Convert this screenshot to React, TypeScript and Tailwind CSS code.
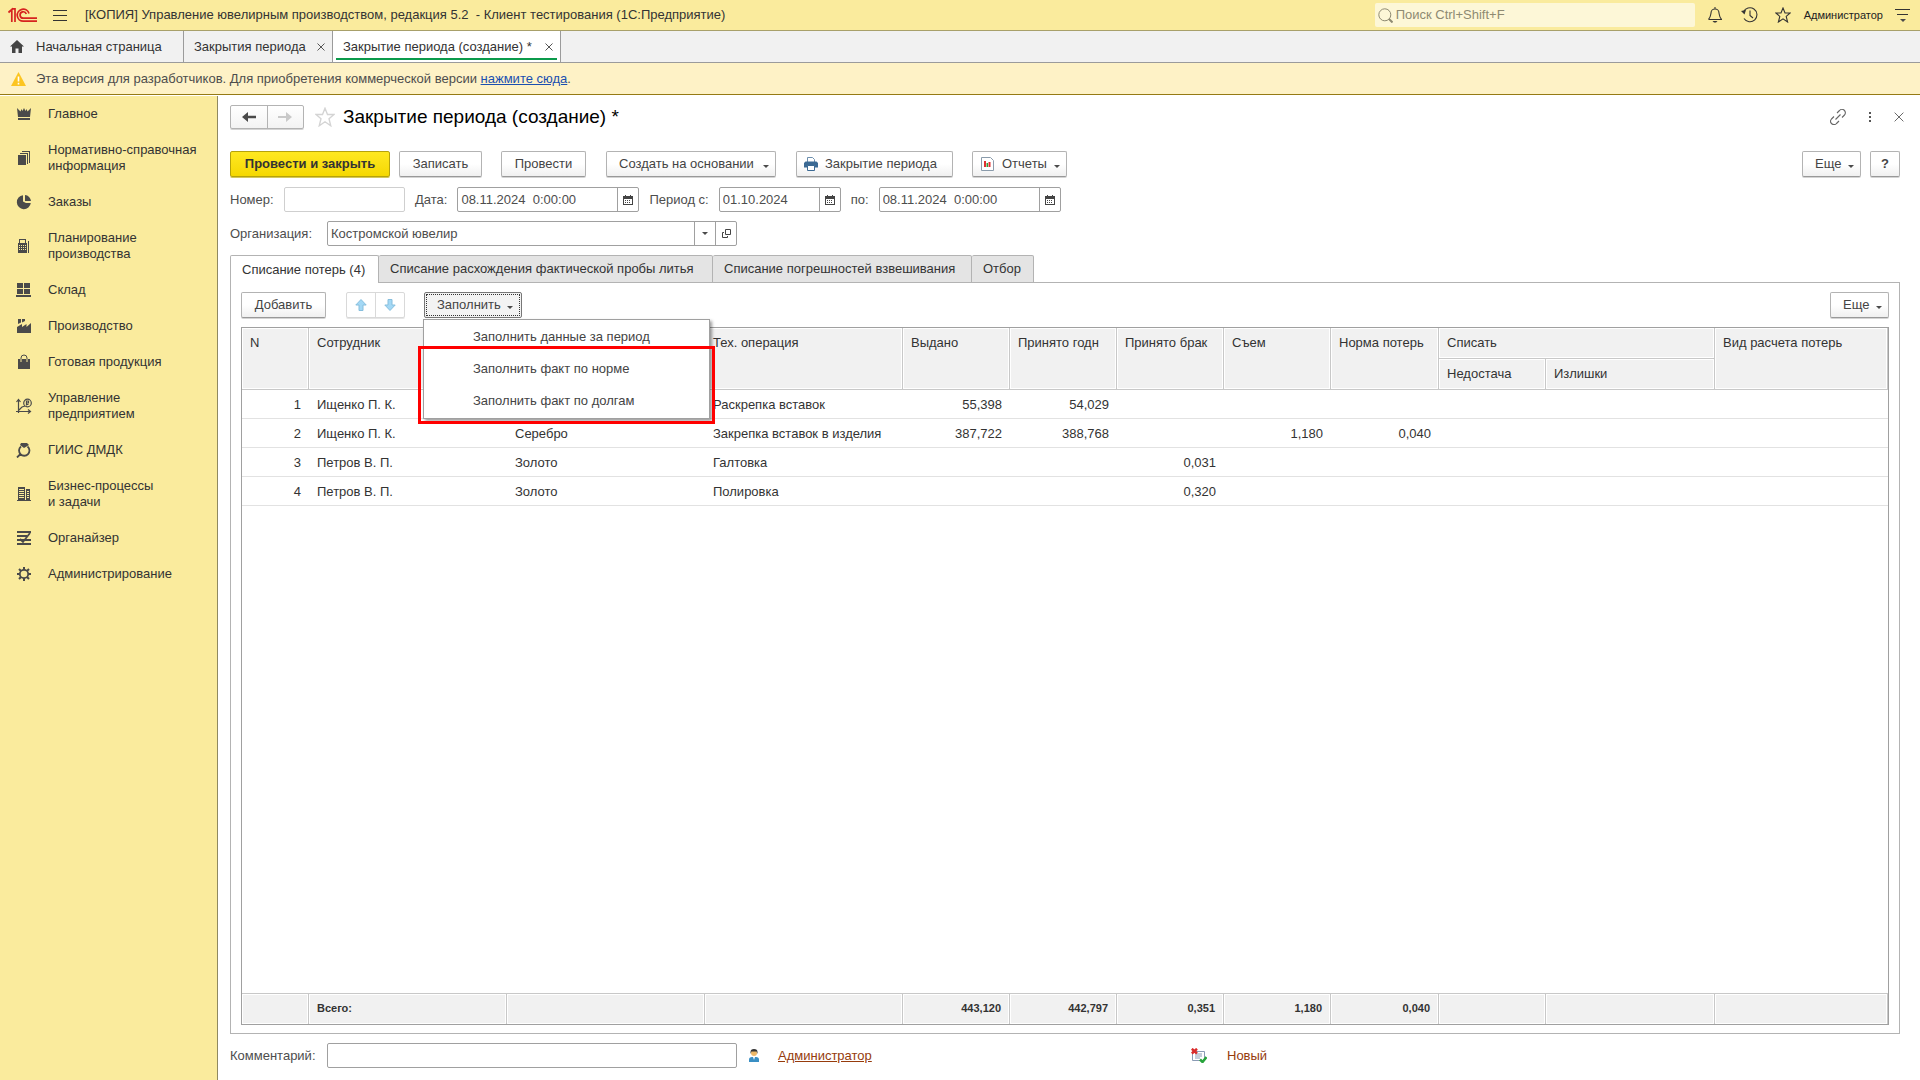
import type { ReactNode } from "react";

type IconProps = { className?: string };

function Logo() {
  return (
    <svg width="29" height="16" viewBox="0 0 29 16" fill="none" stroke="#d6231f" strokeWidth="1.7">
      <path d="M0.500 5.500L3.800 2.500V15M7 15V1.800H4.800L0.800 5" />
      <path d="M21 6.500A6 6 0 1 0 15.500 14.200H29" />
      <path d="M18.300 7A3.200 3.200 0 1 0 15.500 11.200H29" />
    </svg>
  );
}

function Glyph({ children }: { children: ReactNode }) {
  return (
    <svg width="16" height="16" viewBox="0 0 16 16" fill="#4a4a4a" className="shrink-0">
      {children}
    </svg>
  );
}

function Caret({ className = "" }: IconProps) {
  return (
    <svg width="6" height="3" viewBox="0 0 6 3" fill="#4a4a4a" className={className}>
      <path d="M0 0H6L3 3Z" />
    </svg>
  );
}

function CalendarIcon() {
  return (
    <svg width="10" height="10" viewBox="0 0 10 10" fill="#444">
      <path fillRule="evenodd" d="M0 1H2V0H3V1H7V0H8V1H10V10H0ZM1 4V9H9V4Z" />
      <path d="M2 5h1v1H2zM4 5h1v1H4zM6 5h1v1H6zM2 7h1v1H2zM4 7h1v1H4zM6 7h1v1H6z" />
    </svg>
  );
}

function CloseIcon({ size = 8 }: { size?: number }) {
  return (
    <svg width={size} height={size} viewBox="0 0 8 8" stroke="#555" strokeWidth={size > 8 ? 0.7 : 1} fill="none">
      <path d="M0.5 0.5L7.5 7.5M7.5 0.5L0.5 7.5" />
    </svg>
  );
}

function StarIcon({ stroke = "#333", size = 16 }: { stroke?: string; size?: number }) {
  return (
    <svg width={size} height={size} viewBox="0 0 16 16" fill="none" stroke={stroke} strokeWidth="1.1">
      <path d="M8 1L10 6H15.2L11.2 9.4L12.6 15L8 11.8L3.4 15L4.8 9.4L0.8 6H6Z" />
    </svg>
  );
}

const sections: { label: string[]; icon: ReactNode }[] = [
  {
    label: ["Главное"],
    icon: <path d="M1 2L4.5 5.500L5.500 3L6.500 5L8 2L9.500 5L10.500 3L11.500 5.500L15 2L14 11H2ZM2 12H14V14H2Z" />
  },
  {
    label: ["Нормативно-справочная", "информация"],
    icon: <path d="M2 5H10V15H2ZM4 3H12V14H11V4H4ZM6 1H14V13H13V2H6Z" />
  },
  {
    label: ["Заказы"],
    icon: <path d="M7 1.2A7 7 0 1 0 14.8 9H10L7 7.5ZM9 1A6.5 6.5 0 0 1 15 7H9Z" />
  },
  {
    label: ["Планирование", "производства"],
    icon: (
      <path
        fillRule="evenodd"
        d="M2 5H3V1H10V5H11V15H2ZM4 2V5H9V2ZM3 7V8H4V7ZM5 7V8H6V7ZM7 7V8H8V7ZM9 7V8H10V7ZM3 9V10H4V9ZM5 9V10H6V9ZM7 9V10H8V9ZM9 9V10H10V9ZM3 11V12H4V11ZM5 11V12H6V11ZM7 11V12H8V11ZM9 11V12H10V11ZM12 3H13V15H12Z"
      />
    )
  },
  { label: ["Склад"], icon: <path d="M1 1H7V6H1ZM8 1H14V6H8ZM1 7H7V12H1ZM8 7H14V12H8ZM0 13H15V15H0Z" /> },
  { label: ["Производство"], icon: <path d="M1 9L6 6V9L10.500 6V9L15 5V15H1ZM2 1H5V4.500L2 6ZM6 1H9V3L6 4.500Z" /> },
  {
    label: ["Готовая продукция"],
    icon: (
      <>
        <path d="M2 5H14V15H2Z" />
        <path d="M5 6V4A3 3 0 0 1 11 4V6" fill="none" stroke="#4a4a4a" />
        <path d="M5 5V8M11 5V8" stroke="#faeb9d" />
      </>
    )
  },
  {
    label: ["Управление", "предприятием"],
    icon: (
      <g fill="none" stroke="#4a4a4a" strokeWidth="1.2">
        <path d="M2.5 15V2M0.5 4L2.5 1.5L4.5 4M0 13.5H14M12 11.5L14.5 13.5L12 15.5M3 12L6 9L9 8" />
        <circle cx="11.5" cy="5" r="3.8" />
        <path d="M10.5 7.5V3H12.5V5H10M10 6.5H12.5" />
      </g>
    )
  },
  {
    label: ["ГИИС ДМДК"],
    icon: (
      <>
        <path d="M5 1H11L13 3L8 6L4 3Z" />
        <path d="M5 4.500A5.200 5.200 0 1 0 11.500 4.500M4.500 12L1 15.500" fill="none" stroke="#4a4a4a" strokeWidth="1.8" />
      </>
    )
  },
  {
    label: ["Бизнес-процессы", "и задачи"],
    icon: (
      <path
        fillRule="evenodd"
        d="M2 1H9V14H10V3H14V14H15V15H1V14H2ZM3 3V4H8V3ZM3 5V6H8V5ZM3 7V8H8V7ZM3 9V10H8V9ZM3 11V12H8V11ZM11 5V6H13V5ZM11 7V8H13V7ZM11 9V10H13V9ZM11 11V12H13V11Z"
      />
    )
  },
  {
    label: ["Органайзер"],
    icon: <path d="M1 2H15M1 6H11M1 10H15M1 14H15M4 9L7 12L14 3" fill="none" stroke="#4a4a4a" strokeWidth="1.8" />
  },
  {
    label: ["Администрирование"],
    icon: (
      <g fill="none" stroke="#4a4a4a">
        <circle cx="8" cy="8" r="4.2" strokeWidth="1.8" />
        <path d="M8 1V4M8 12V15M1 8H4M12 8H15M3 3L5 5M11 11L13 13M13 3L11 5M5 11L3 13" strokeWidth="2" />
      </g>
    )
  }
];

type LossRow = { employee: string; metal: string; operation: string; values: string[] };

const rows: LossRow[] = [
  { employee: "Ищенко П. К.", metal: "", operation: "Раскрепка вставок", values: ["55,398", "54,029", "", "", ""] },
  { employee: "Ищенко П. К.", metal: "Серебро", operation: "Закрепка вставок в изделия", values: ["387,722", "388,768", "", "1,180", "0,040"] },
  { employee: "Петров В. П.", metal: "Золото", operation: "Галтовка", values: ["", "", "0,031", "", ""] },
  { employee: "Петров В. П.", metal: "Золото", operation: "Полировка", values: ["", "", "0,320", "", ""] }
];

const totals = ["443,120", "442,797", "0,351", "1,180", "0,040"];
const columns = ["N", "Сотрудник", "", "Тех. операция", "Выдано", "Принято годн", "Принято брак", "Съем", "Норма потерь"];
const tabs = [
  { label: "Списание потерь (4)", width: "w-[149px]" },
  { label: "Списание расхождения фактической пробы литья", width: "w-[334px]" },
  { label: "Списание погрешностей взвешивания", width: "w-[259px]" },
  { label: "Отбор", width: "w-[62px]" }
];
const fillActions = ["Заполнить данные за период", "Заполнить факт по норме", "Заполнить факт по долгам"];

const headCell = "border-r border-b border-[#c8c8c8] bg-[#f1f1f1] px-2 pt-[7px] text-left align-top font-normal shadow-[inset_0_0_0_1px_white]";
const footCell = "border-r border-t border-[#c8c8c8] bg-[#f1f1f1] px-2 pb-[3px] shadow-[inset_0_0_0_1px_white]";
const bodyCell = "border-b border-[#e2e2e2] px-2 pt-0.5";

function Button({ children, className = "" }: { children: ReactNode; className?: string }) {
  return (
    <button
      type="button"
      className={`flex h-[26px] items-center rounded-xs border border-[#b3b3b3] border-b-[#999] bg-linear-to-b from-white from-50% to-[#f0f0f0] whitespace-nowrap text-[#444] shadow-[0_1px_0_#d4d4d4] ${className}`}
    >
      {children}
    </button>
  );
}

function DateField({ id, label, value, className }: { id: string; label: string; value: string; className: string }) {
  return (
    <div className="flex items-center">
      <label htmlFor={id} className="pr-2.5 pl-2.5">{label}</label>
      <div className={`flex h-[25px] rounded-xs border border-[#a0a0a0] bg-white ${className}`}>
        <input id={id} defaultValue={value} className="min-w-0 flex-1 px-[3px] whitespace-pre outline-none" />
        <button type="button" aria-label="Календарь" className="flex w-[21px] items-center justify-center border-l border-[#a0a0a0]">
          <CalendarIcon />
        </button>
      </div>
    </div>
  );
}

function TopBar() {
  return (
    <header className="flex h-[31px] items-center border-b border-[#a8a06a] bg-[#faeb9d] pr-2 pl-2">
      <Logo />
      <button type="button" aria-label="Меню" className="ml-4 flex w-3.5 flex-col gap-1">
        <span className="h-px bg-[#333]" />
        <span className="h-px bg-[#333]" />
        <span className="h-px bg-[#333]" />
      </button>
      <span className="ml-[18px] whitespace-pre text-[#333]">[КОПИЯ] Управление ювелирным производством, редакция 5.2  - Клиент тестирования (1С:Предприятие)</span>
      <div className="ml-auto flex h-6 w-80 items-center gap-[3px] rounded-xs bg-[#fdf7d7] pl-[3px]">
        <svg width="15" height="15" viewBox="0 0 15 15" fill="none" stroke="#8e8a72">
          <circle cx="6.8" cy="6.8" r="6" />
          <path d="M11 11L14.5 14.5" strokeWidth="2" />
        </svg>
        <input aria-label="Поиск" placeholder="Поиск Ctrl+Shift+F" className="flex-1 outline-none placeholder:text-[#8e8a72]" />
      </div>
      <button type="button" aria-label="Уведомления" className="ml-[13px]">
        <svg width="14" height="16" viewBox="0 0 14 16" fill="none" stroke="#333" strokeWidth="1.1">
          <path d="M7 0V2M0.5 12.5H13.5C11.5 10.5 11.5 9 11 6A4 4 0 0 0 3 6C2.500 9 2.500 10.500 0.500 12.500" />
          <path d="M4.500 14H9.500L8 15.500H6Z" fill="#333" stroke="none" />
        </svg>
      </button>
      <button type="button" aria-label="История" className="ml-[19px]">
        <svg width="17" height="16" viewBox="0 0 17 16" fill="none" stroke="#333" strokeWidth="1.1">
          <path d="M2.500 5A7 7 0 1 1 3 11.500M9 3.500V8.500L12 11" />
          <path d="M0 4L5 3L3.500 7.500Z" fill="#333" stroke="none" />
        </svg>
      </button>
      <button type="button" aria-label="Избранное" className="ml-[17px]"><StarIcon /></button>
      <span className="ml-[13px] text-[11px] text-[#222]">Администратор</span>
      <button type="button" aria-label="Настройки" className="mr-0.5 ml-3 flex w-[15px] flex-col items-center gap-1">
        <span className="h-px w-full bg-[#333]" />
        <span className="h-px w-[11px] bg-[#333]" />
        <Caret />
      </button>
    </header>
  );
}

function WindowTabs() {
  return (
    <nav className="flex h-8 border-b border-[#9b9b9b] bg-[#f1f1f1] text-[#333]">
      <button type="button" className="flex w-[184px] items-center gap-3 border-r border-[#9b9b9b] pl-2.5">
        <svg width="14" height="13" viewBox="0 0 14 13" fill="#444">
          <path d="M7 0L14 6.500H12V13H8.500V8.500H5.500V13H2V6.500H0Z" />
        </svg>
        Начальная страница
      </button>
      <button type="button" className="flex w-[149px] items-center justify-between border-r border-[#9b9b9b] pr-[7px] pl-2.5">
        Закрытия периода <CloseIcon />
      </button>
      <button type="button" className="flex w-[228px] border-r border-[#9b9b9b] bg-white px-[3px] pb-0.5">
        <span className="flex h-full flex-1 items-center justify-between border-b-2 border-[#0b9a4b] pt-1 pr-1 pl-[7px]">
          Закрытие периода (создание) * <CloseIcon />
        </span>
      </button>
    </nav>
  );
}

function Sidebar() {
  return (
    <aside className="w-[218px] shrink-0 border-r border-[#8f8960] bg-[#faeb9d]">
      {sections.map((section) => (
        <a key={section.label[0]} href="#" className="flex items-center gap-4 py-2.5 pl-4 leading-4 text-[#333]">
          <Glyph>{section.icon}</Glyph>
          <span>
            {section.label.map((line) => (
              <span key={line} className="block whitespace-nowrap">{line}</span>
            ))}
          </span>
        </a>
      ))}
    </aside>
  );
}

function FillMenu() {
  return (
    <div className="relative ml-[19px]">
      <button
        type="button"
        aria-expanded="true"
        className="flex h-[26px] w-[98px] rounded-xs border border-[#777] bg-[#f3f3f3] p-px text-[#444]"
      >
        <span className="flex h-full flex-1 items-center gap-1.5 border border-dotted border-[#333] pl-2.5">
          Заполнить <Caret className="mt-1" />
        </span>
      </button>
      <div role="menu" className="absolute top-[27px] -left-px z-10 w-[287px] border border-[#a0a0a0] bg-white pt-px pb-px text-[#444] shadow-[2px_2px_3px_#00000066]">
        {fillActions.map((action) => (
          <button key={action} type="button" role="menuitem" className="flex h-8 w-full items-center pl-[49px]">
            {action}
          </button>
        ))}
        <div className="pointer-events-none absolute top-[26px] -right-[6px] -bottom-[6px] -left-[6px] border-3 border-[#ff0000]" />
      </div>
    </div>
  );
}

function LossTable() {
  return (
    <div className="mt-[9px] flex flex-1 border border-[#a0a0a0]">
      <table className="w-full table-fixed border-separate border-spacing-0 text-[#333]">
        <colgroup>
          <col className="w-[67px]" />
          <col className="w-[198px]" />
          <col className="w-[198px]" />
          <col className="w-[198px]" />
          <col className="w-[107px]" />
          <col className="w-[107px]" />
          <col className="w-[107px]" />
          <col className="w-[107px]" />
          <col className="w-[108px]" />
          <col className="w-[107px]" />
          <col className="w-[169px]" />
          <col />
        </colgroup>
        <thead>
          <tr className="h-[31px]">
            {columns.map((column) => (
              <th key={column} rowSpan={2} className={headCell}>{column}</th>
            ))}
            <th colSpan={2} className={headCell}>Списать</th>
            <th rowSpan={2} className={headCell}>Вид расчета потерь</th>
          </tr>
          <tr className="h-[31px]">
            <th className={headCell}>Недостача</th>
            <th className={headCell}>Излишки</th>
          </tr>
        </thead>
        <tbody>
          {rows.map((row, index) => (
            <tr key={row.operation} className="h-[29px]">
              <td className={`${bodyCell} text-right`}>{index + 1}</td>
              <td className={bodyCell}>{row.employee}</td>
              <td className={bodyCell}>{row.metal}</td>
              <td className={bodyCell}>{row.operation}</td>
              {row.values.map((value, i) => (
                <td key={i} className={`${bodyCell} text-right`}>{value}</td>
              ))}
              <td className={bodyCell} />
              <td className={bodyCell} />
              <td className={bodyCell} />
            </tr>
          ))}
          <tr>
            <td colSpan={12} />
          </tr>
        </tbody>
        <tfoot className="text-[11px] font-bold">
          <tr className="h-[31px]">
            <td className={footCell} />
            <td className={footCell}>Всего:</td>
            <td className={footCell} />
            <td className={footCell} />
            {totals.map((total, i) => (
              <td key={i} className={`${footCell} text-right`}>{total}</td>
            ))}
            <td className={footCell} />
            <td className={footCell} />
            <td className={footCell} />
          </tr>
        </tfoot>
      </table>
    </div>
  );
}

function FormHeader() {
  return (
    <div className="mt-[9px] flex h-6 items-center">
      <div className="flex h-6 w-[74px] rounded-xs border border-[#b3b3b3] bg-linear-to-b from-white to-[#f3f3f3] shadow-[0_1px_0_#d4d4d4]">
        <button type="button" aria-label="Назад" className="flex flex-1 items-center justify-center border-r border-[#b3b3b3]">
          <svg width="14" height="10" viewBox="0 0 14 10" fill="#4a4a4a">
            <path d="M0 5L6 0V3.800H14V6.200H6V10Z" />
          </svg>
        </button>
        <button type="button" aria-label="Вперед" className="flex flex-1 items-center justify-center">
          <svg width="14" height="10" viewBox="0 0 14 10" fill="#c9c9c9">
            <path d="M14 5L8 0V4H0V6H8V10Z" />
          </svg>
        </button>
      </div>
      <button type="button" aria-label="В избранное" className="ml-[11px]"><StarIcon stroke="#d4d4d4" size={20} /></button>
      <h1 className="ml-2 text-[19px] text-black">Закрытие периода (создание) *</h1>
      <div className="ml-auto flex items-center">
        <button type="button" aria-label="Ссылка">
          <svg width="16" height="16" viewBox="0 0 16 16" fill="none" stroke="#666" strokeWidth="1.100">
            <path d="M7 4L9.500 1.500A3 3 0 0 1 14.500 6L12 8.500M9 12L6.500 14.500A3 3 0 0 1 1.500 10L4 7.500M5.500 10.500L10.500 5.500" />
          </svg>
        </button>
        <button type="button" aria-label="Действия" className="ml-[21px] flex w-[5px] flex-col items-center gap-0.5">
          <span className="size-0.5 bg-[#555]" />
          <span className="size-0.5 bg-[#555]" />
          <span className="size-0.5 bg-[#555]" />
        </button>
        <button type="button" aria-label="Закрыть" className="mr-[-4px] ml-[22px]"><CloseIcon size={10} /></button>
      </div>
    </div>
  );
}

function CommandBar() {
  return (
    <div className="mt-[22px] flex items-center">
      <button
        type="button"
        className="h-[26px] w-40 rounded-xs border border-[#b5a20c] bg-linear-to-b from-[#ffe81f] to-[#f5d800] font-bold text-[#333] shadow-[0_1px_0_#d4c85c]"
      >
        Провести и закрыть
      </button>
      <Button className="ml-[9px] w-[83px] justify-center">Записать</Button>
      <Button className="ml-[19px] w-[85px] justify-center">Провести</Button>
      <Button className="ml-5 w-[170px] justify-between pr-1.5 pl-3">Создать на основании <Caret className="mt-1" /></Button>
      <Button className="ml-5 w-[157px] gap-[7px] pl-[7px]">
        <svg width="14" height="14" viewBox="0 0 14 14">
          <path d="M3.500 5V0.500H8.500L10.500 2.500V5" fill="#fff" stroke="#6d8fae" />
          <path d="M1.500 4.500H12.500L14 6V10.500H0V6Z" fill="#3c6a94" />
          <path d="M3.500 8.500H10.500V13.500H3.500Z" fill="#fff" stroke="#3c6a94" />
        </svg>
        Закрытие периода
      </Button>
      <Button className="ml-[19px] w-[95px] justify-between pr-1.5 pl-2">
        <span className="flex items-center gap-2">
          <svg width="13" height="14" viewBox="0 0 13 14">
            <path d="M0.500 0.500H9.500L12.500 3.500V13.500H0.500Z" fill="#fff" stroke="#8a9bab" />
            <path d="M3 4H5V10H3Z" fill="#e03030" />
            <path d="M5.500 6H7V10H5.500Z" fill="#2e9e3a" />
            <path d="M7.500 5H9.500V10H7.500Z" fill="#e03030" />
          </svg>
          Отчеты
        </span>
        <Caret className="mt-1" />
      </Button>
      <Button className="ml-auto w-[59px] justify-between pr-1.5 pl-3">Еще <Caret className="mt-1" /></Button>
      <Button className="ml-[9px] w-[30px] justify-center font-bold">?</Button>
    </div>
  );
}

function Fields() {
  return (
    <>
      <div className="mt-2.5 flex items-center">
        <label htmlFor="number" className="w-[54px]">Номер:</label>
        <input id="number" className="h-[25px] w-[121px] rounded-xs border border-[#cfcfcf] outline-none" />
        <DateField id="date" label="Дата:" value="08.11.2024  0:00:00" className="w-[182px]" />
        <DateField id="from" label="Период с:" value="01.10.2024" className="w-[122px]" />
        <DateField id="to" label="по:" value="08.11.2024  0:00:00" className="w-[182px]" />
      </div>
      <div className="mt-[9px] flex items-center">
        <label htmlFor="organization" className="w-[97px]">Организация:</label>
        <div className="flex h-[25px] w-[410px] rounded-xs border border-[#a0a0a0]">
          <input id="organization" defaultValue="Костромской ювелир" className="min-w-0 flex-1 px-[3px] outline-none" />
          <button type="button" aria-label="Выбрать" className="flex w-[21px] items-center justify-center border-l border-[#a0a0a0]"><Caret /></button>
          <button type="button" aria-label="Открыть" className="flex w-[21px] items-center justify-center border-l border-[#a0a0a0]">
            <svg width="9" height="9" viewBox="0 0 9 9" fill="none" stroke="#444">
              <path d="M3.500 0.500H8.500V5.500H3.500ZM2 3.500H0.500V8.500H5.500V7" />
            </svg>
          </button>
        </div>
      </div>
    </>
  );
}

function MoveArrow({ down = false }: { down?: boolean }) {
  return (
    <svg width="12" height="12" viewBox="0 0 12 12" fill="#a3d8f5" stroke="#86bedd">
      <path d={down ? "M6 11.500L0.800 6H4V0.500H8V6H11.200Z" : "M6 0.500L0.800 6H4V11.500H8V6H11.200Z"} />
    </svg>
  );
}

export default function App() {
  return (
    <div className="flex min-h-screen flex-col bg-white font-['Liberation_Sans',Arial,sans-serif] text-[13px] leading-4 text-[#4d4d4d]">
      <TopBar />
      <WindowTabs />
      <div className="flex h-8 items-center gap-2.5 border-b border-[#957a14] bg-[#fef2c6] pl-[11px]">
        <svg width="15" height="14" viewBox="0 0 15 14">
          <path d="M7.500 0L15 14H0Z" fill="#fcc521" />
          <path d="M6.700 4.500H8.300V9.500H6.700ZM6.700 10.800H8.300V12.400H6.700Z" fill="#fff" />
        </svg>
        <span>
          Эта версия для разработчиков. Для приобретения коммерческой версии <a href="#" className="text-[#1a4fb0] underline">нажмите сюда</a>.
        </span>
      </div>
      <div className="mt-px flex flex-1">
        <Sidebar />
        <main className="flex min-w-0 flex-1 flex-col pr-5 pl-3">
          <FormHeader />
          <CommandBar />
          <Fields />
          <div role="tablist" className="mt-[9px] flex">
            {tabs.map((tab, index) => (
              <button
                key={tab.label}
                type="button"
                role="tab"
                aria-selected={index === 0}
                className={`h-7 rounded-t-xs border-t border-r border-[#b3b3b3] pl-[11px] text-left whitespace-nowrap text-[#333] ${tab.width} ${index === 0 ? "border-l bg-white" : "border-b bg-[#e4e4e4]"}`}
              >
                {tab.label}
              </button>
            ))}
            <div className="flex-1 border-b border-[#b3b3b3]" />
          </div>
          <section className="flex flex-1 flex-col border border-t-0 border-[#b3b3b3] px-2.5 pt-[9px] pb-2">
            <div className="flex items-center">
              <Button className="w-[85px] justify-center">Добавить</Button>
              <div className="ml-5 flex h-[26px] w-[59px] rounded-xs border border-[#d9d9d9] shadow-[0_1px_0_#e6e6e6]">
                <button type="button" aria-label="Вверх" className="flex flex-1 items-center justify-center border-r border-[#d9d9d9]"><MoveArrow /></button>
                <button type="button" aria-label="Вниз" className="flex flex-1 items-center justify-center"><MoveArrow down /></button>
              </div>
              <FillMenu />
              <Button className="ml-auto w-[59px] justify-between pr-1.5 pl-3">Еще <Caret className="mt-1" /></Button>
            </div>
            <LossTable />
          </section>
          <footer className="mt-[9px] mb-3 flex items-center">
            <label htmlFor="comment" className="w-[97px]">Комментарий:</label>
            <input id="comment" className="h-[25px] w-[410px] rounded-xs border border-[#a0a0a0] outline-none" />
            <svg width="10" height="13" viewBox="0 0 10 13" className="ml-3">
              <path d="M0 13V10.500Q0 8 3 8H7Q10 8 10 10.500V13Z" fill="#3a8fc4" />
              <path d="M4 8H6L5 11Z" fill="#fff" />
              <circle cx="5" cy="4" r="3" fill="#eeb868" />
              <path d="M1.500 5V3A3.500 3 0 0 1 8.500 3V5L7.500 2.500H2.500Z" fill="#333" />
            </svg>
            <a href="#" className="ml-[19px] w-[413px] text-[#963b0c] underline">Администратор</a>
            <svg width="16" height="15" viewBox="0 0 16 15" fill="none">
              <path d="M1.500 3.500H13.500V12.500H1.500Z" fill="#fff" stroke="#8a9bb5" />
              <path d="M4 6H11M4 8H11M4 10H9" stroke="#8a9bb5" />
              <path d="M0.800 0.800L6 5.500M6 0.800L0.800 5.500" stroke="#d92b2b" strokeWidth="2.500" />
              <path d="M9 11.500L11.500 14L15.500 9" stroke="#27a43b" strokeWidth="2.500" />
            </svg>
            <a href="#" className="ml-5 text-[#963b0c]">Новый</a>
          </footer>
        </main>
      </div>
    </div>
  );
}
